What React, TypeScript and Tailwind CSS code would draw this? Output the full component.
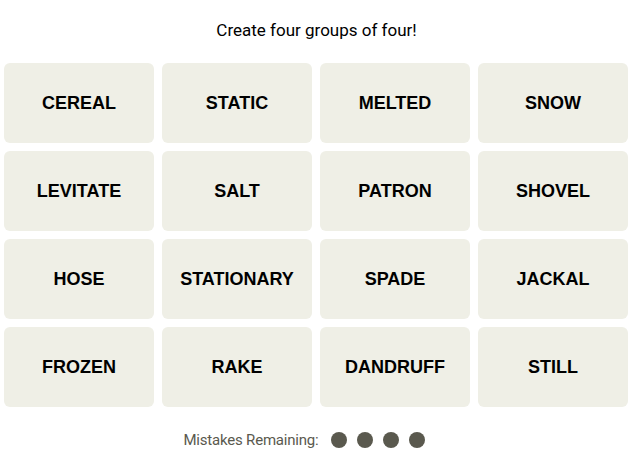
export default function App() {
  const words = [
    "CEREAL", "STATIC", "MELTED", "SNOW",
    "LEVITATE", "SALT", "PATRON", "SHOVEL",
    "HOSE", "STATIONARY", "SPADE", "JACKAL",
    "FROZEN", "RAKE", "DANDRUFF", "STILL",
  ];

  return (
    <div className="w-[633px] h-[450px] bg-white pt-5" style={{ fontFamily: "Roboto, 'Liberation Sans', sans-serif" }}>
      {/* Heading */}
      <p
        className="text-center text-[17px] leading-5 text-black"
        style={{ fontFamily: "'Liberation Sans Narrow', Roboto, sans-serif" }}
      >
        Create four groups of four!
      </p>

      {/* Word grid */}
      <div className="w-[624px] ml-1 mt-[23px] grid grid-cols-4 gap-2">
        {words.map((w) => (
          <button
            key={w}
            className="h-20 rounded-md bg-[#efefe6] flex items-center justify-center text-[18px] font-bold text-black uppercase"
            style={{ fontFamily: "'Liberation Sans', Arial, sans-serif" }}
          >
            {w}
          </button>
        ))}
      </div>

      {/* Mistakes */}
      <div className="mt-[25px] pr-[25px] flex items-center justify-center gap-[10px]">
        <span className="text-[15px] leading-4 text-[#5a594e] mr-[2px] tracking-[-0.2px]">Mistakes Remaining:</span>
        {[0, 1, 2, 3].map((i) => (
          <span key={i} className="w-4 h-4 rounded-full bg-[#5a594e]"></span>
        ))}
      </div>
    </div>
  );
}
